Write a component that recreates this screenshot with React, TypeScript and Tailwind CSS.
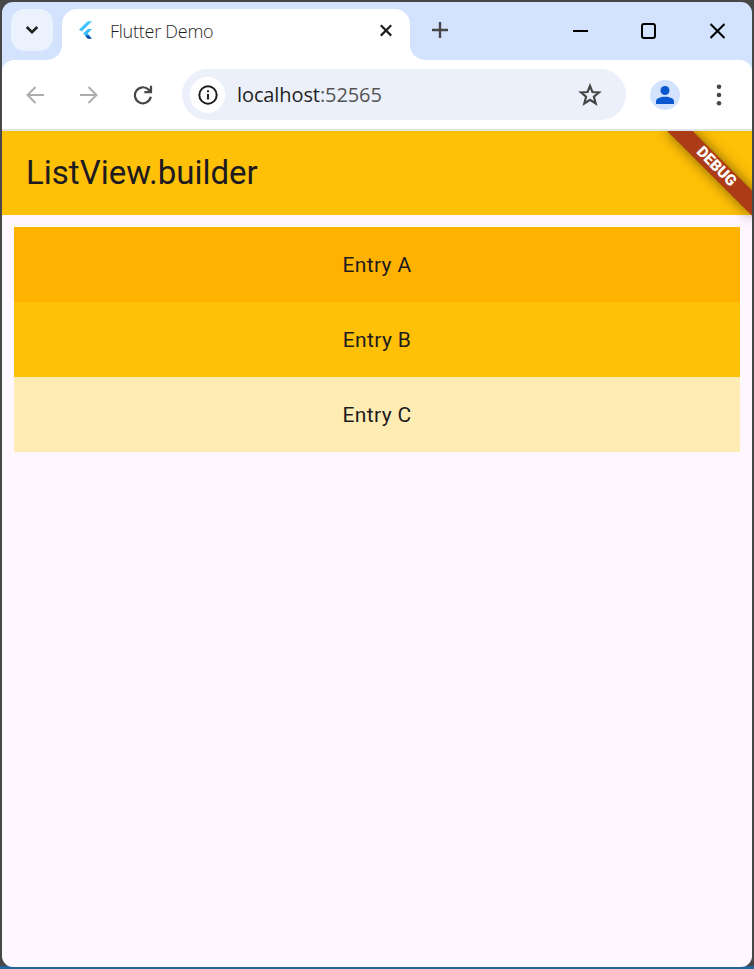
import React from "react";

const entries = [
  { name: "A", color: "bg-[#ffb300]" },
  { name: "B", color: "bg-[#ffc107]" },
  { name: "C", color: "bg-[#ffecb3]" },
];

function FlutterLogo() {
  return (
    <svg width="16" height="20" viewBox="0 0 16 20" className="shrink-0">
      <path d="M9.8 1.2H14L3.8 11.6L1 9.6Z" fill="#40c4ff" />
      <path d="M9.8 9H14L9.6 13.4L13.8 18.6H9.8L5.2 13.6Z" fill="#35bdf8" />
      <path d="M7.4 15.9L9.5 13.9L13.9 18.7H9.8Z" fill="#0d47a1" />
      <path d="M7.4 15.9L9.5 13.8L11.6 15.9Z" fill="#2196e0" />
    </svg>
  );
}

function TabStrip() {
  return (
    <div className="flex h-[58px] shrink-0 bg-[#d3e3fd]">
      <button className="ml-[9px] mt-[7px] flex h-[42px] w-[42px] items-center justify-center rounded-[14px] bg-[#ebf2fe]">
        <svg width="14" height="10" viewBox="0 0 14 10" fill="none" stroke="#1f1f1f" strokeWidth="2.5">
          <path d="M1.7 2L7 7.2L12.3 2" />
        </svg>
      </button>
      <div className="relative ml-[9px] mt-[7px] flex h-[51px] w-[348px] items-start rounded-t-[15px] bg-white">
        <svg className="absolute -left-[15px] bottom-0" width="15" height="15" viewBox="0 0 15 15">
          <path d="M15 0V15H0A15 15 0 0 0 15 0Z" fill="white" />
        </svg>
        <svg className="absolute -right-[15px] bottom-0" width="15" height="15" viewBox="0 0 15 15">
          <path d="M0 0V15H15A15 15 0 0 1 0 0Z" fill="white" />
        </svg>
        <div className="ml-4 mt-[11px] flex">
          <FlutterLogo />
        </div>
        <span className="ml-4 mt-[10px] w-[200px] whitespace-nowrap font-['Open_Sans',sans-serif] text-[18px] font-[350] leading-6 tracking-[-0.25px] text-[#1f1f1f]">
          Flutter Demo
        </span>
        <svg className="ml-[70px] mt-[15px]" width="12" height="13" viewBox="0 0 12 13" stroke="#1f1f1f" strokeWidth="2.2">
          <path d="M0.8 1.2L11.2 11.6M11.2 1.2L0.8 11.6" />
        </svg>
      </div>
      <svg className="ml-[22px] mt-5" width="16" height="16" viewBox="0 0 16 16" stroke="#474747" strokeWidth="2.4">
        <path d="M0 8H16M8 0V16" />
      </svg>
      <div className="ml-auto flex pr-[27px] pt-[21px]">
        <svg width="15" height="16" viewBox="0 0 15 16" stroke="black" strokeWidth="2">
          <path d="M0 8H15" />
        </svg>
        <svg className="ml-[53px]" width="15" height="16" viewBox="0 0 15 16" fill="none" stroke="black" strokeWidth="2">
          <rect x="1" y="1" width="13" height="14" rx="2" />
        </svg>
        <svg className="ml-[54px]" width="15" height="16" viewBox="0 0 15 16" stroke="black" strokeWidth="2">
          <path d="M0.5 1L14.5 15M14.5 1L0.5 15" />
        </svg>
      </div>
    </div>
  );
}

function Toolbar() {
  return (
    <div className="shrink-0 bg-[#d3e3fd]">
      <div className="flex h-[71px] items-center rounded-t-[12px] border-b-2 border-[#e1e3e6] bg-white">
        <svg className="ml-6" width="18" height="18" viewBox="0 0 18 18" fill="none" stroke="#adadad" strokeWidth="2">
          <path d="M18 9H2M9.5 1L1.5 9L9.5 17" />
        </svg>
        <svg className="ml-9" width="18" height="18" viewBox="0 0 18 18" fill="none" stroke="#adadad" strokeWidth="2">
          <path d="M0 9H16M8.5 1L16.5 9L8.5 17" />
        </svg>
        <svg className="ml-[35px]" width="20" height="20" viewBox="0 0 20 20" fill="none" stroke="#474747" strokeWidth="2.2">
          <path d="M17.8 11.8A8 8 0 1 1 15.6 4.6L17 6.2M18 0.8V7.2H11.4" />
        </svg>
        <div className="ml-[29px] flex h-[51px] w-[444px] items-center rounded-full bg-[#ebf0fa] pl-2">
          <div className="flex h-9 w-[35px] items-center justify-center rounded-full bg-white">
            <svg width="20" height="20" viewBox="0 0 20 20" fill="none" stroke="#1f1f1f" strokeWidth="2">
              <circle cx="10" cy="10" r="8.7" />
              <path d="M10 9V14.6M10 5.2V7.2" />
            </svg>
          </div>
          <span className="ml-3 w-[300px] font-['Open_Sans',sans-serif] text-[20px] font-[370] leading-7 tracking-[-0.1px] text-[#1f1f1f]">
            localhost<span className="text-[#545454]">:52565</span>
          </span>
          <svg className="ml-[41px]" width="24" height="24" viewBox="0 0 24 24" fill="none" stroke="#474747" strokeWidth="2.2">
            <path d="M12 2.9L14.4 9L21 9.5L15.9 13.7L17.7 20.5L12 16.8L6.3 20.5L8.1 13.7L3 9.5L9.6 9Z" />
          </svg>
        </div>
        <div className="ml-6 flex h-[30px] w-[30px] items-center justify-center rounded-full bg-[#d3e3fd]">
          <svg width="18" height="18" viewBox="0 0 18 18" fill="#0b57d0">
            <circle cx="9" cy="4.5" r="4.5" />
            <path d="M0 18V15.3C0 12.3 4.5 10.8 9 10.8S18 12.3 18 15.3V18Z" />
          </svg>
        </div>
        <svg className="ml-9" width="6" height="22" viewBox="0 0 6 22" fill="#474747">
          <circle cx="3" cy="2.7" r="2.3" />
          <circle cx="3" cy="11" r="2.3" />
          <circle cx="3" cy="19.3" r="2.3" />
        </svg>
      </div>
    </div>
  );
}

function DebugBanner() {
  return (
    <div className="pointer-events-none absolute right-0 top-0 h-[120px] w-[120px] overflow-hidden">
      <div className="absolute left-[120px] top-0 h-0 w-0 origin-top-left rotate-45">
        <div className="absolute -left-[60px] top-[42px] flex h-[18px] w-[120px] items-center justify-center bg-[#ac3c16] font-[Roboto,sans-serif] text-[15.3px] font-black leading-none text-white shadow-[0_0_14px_rgba(0,0,0,0.5)]">
          DEBUG
        </div>
      </div>
    </div>
  );
}

export default function App() {
  return (
    <div className="flex h-[969px] w-[754px] flex-col bg-[linear-gradient(#474747_0px,#474747_966px,#23659b_966px)] p-[2px]">
      <div className="flex flex-1 flex-col overflow-hidden rounded-[11px]">
        <TabStrip />
        <Toolbar />
        <main className="relative flex-1 bg-[#fef7ff] font-[Roboto,sans-serif] text-[#1d1b20]">
          <header className="flex h-[84px] items-center bg-[#ffc107] px-6">
            <h1 className="text-[33px] leading-[42px]">ListView.builder</h1>
          </header>
          <div className="flex flex-col p-3">
            {entries.map((entry) => (
              <div
                key={entry.name}
                className={`flex h-[75px] items-center justify-center text-[21px] leading-[30px] tracking-[0.375px] ${entry.color}`}
              >
                Entry {entry.name}
              </div>
            ))}
          </div>
          <DebugBanner />
        </main>
      </div>
    </div>
  );
}
